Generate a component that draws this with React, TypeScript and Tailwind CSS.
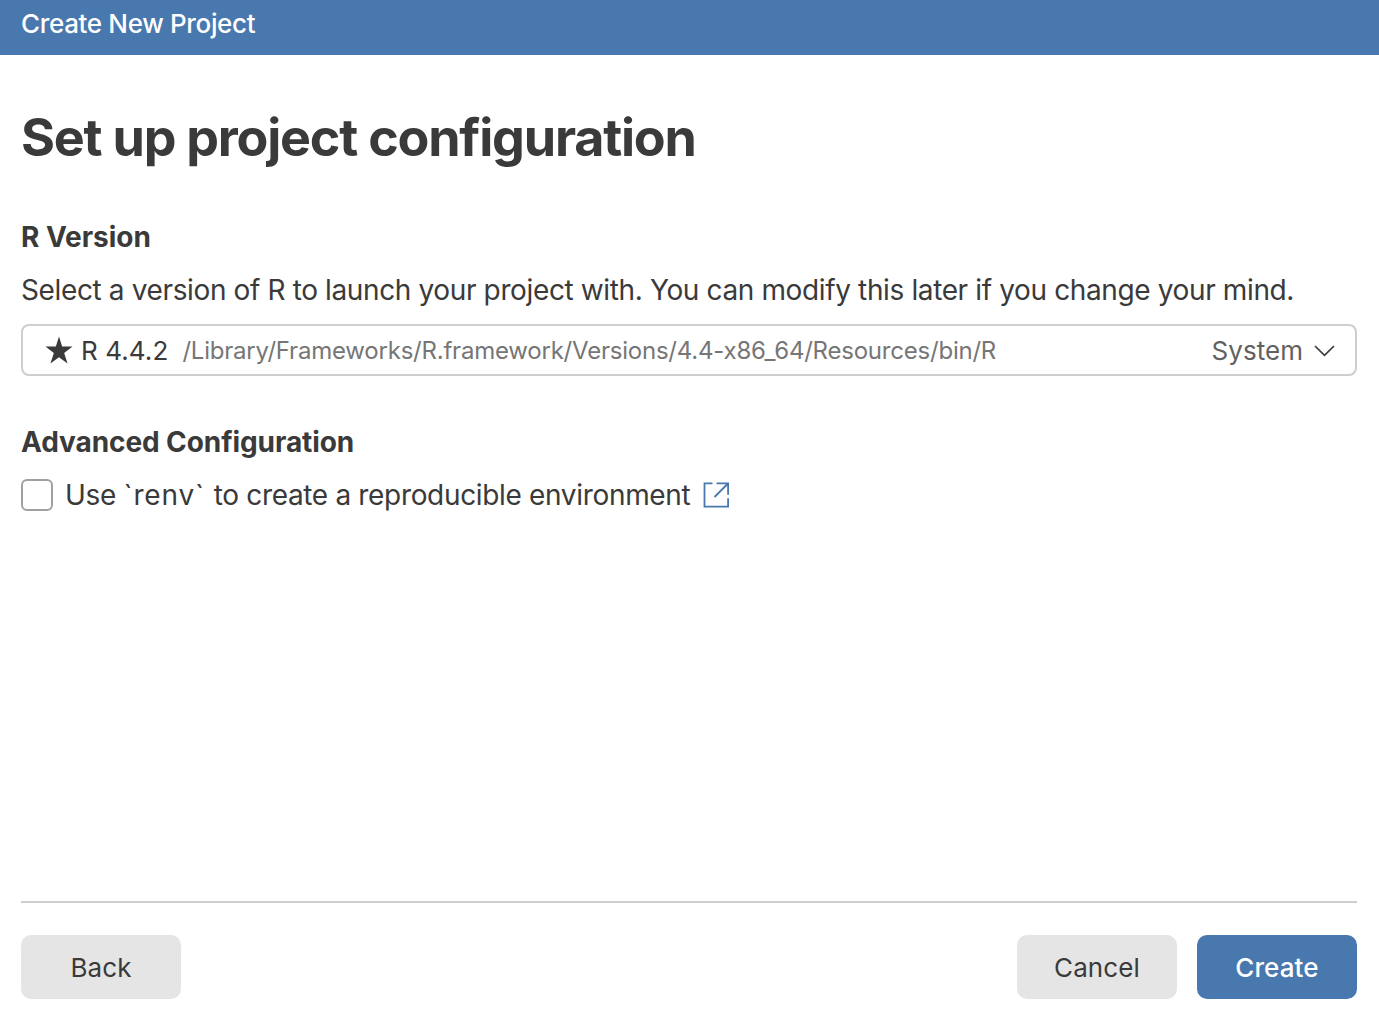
import React from 'react';

function ActionButton({ label, primary = false }: { label: string; primary?: boolean }) {
  return (
    <button
      className={`h-16 w-40 rounded-[10px] pt-0.5 text-[26px] leading-10 tracking-[0.1px] ${
        primary ? 'bg-[#4878ad] font-[450] text-white' : 'bg-[#e5e5e5] text-[#3a3a3a]'
      }`}
    >
      {label}
    </button>
  );
}

export default function App() {
  return (
    <div className="flex h-[1028px] w-full flex-col bg-white font-['Inter',sans-serif] text-[#3a3a3a]">
      <header className="flex h-[55px] shrink-0 items-start bg-[#4878ad] px-[21px] pt-[4px] text-[26px] leading-10 font-[450] tracking-[-0.34px] text-white">
        <span className="whitespace-nowrap">Create New Project</span>
      </header>
      <main className="flex flex-1 flex-col px-[21px] pr-[22px]">
        <h1 className="mt-[51px] h-16 text-[52px] leading-16 font-bold tracking-[-1.22px] whitespace-nowrap">
          <span>Set up project configuration</span>
        </h1>
        <h2 className="mt-[47px] h-10 text-[28px] leading-10 font-bold tracking-[-0.04px] whitespace-nowrap">
          <span>R Version</span>
        </h2>
        <p className="mt-[13px] h-10 text-[28px] leading-10 tracking-[-0.37px] whitespace-nowrap">
          <span>Select a version of R to launch your project with. You can modify this later if you change your mind.</span>
        </p>
        <button className="mt-[14px] flex h-[52px] items-center rounded-lg border-2 border-[#cecece] pr-[20px] pl-[22px] whitespace-nowrap">
          <svg className="h-7 w-7" viewBox="0 0 28 28" fill="currentColor">
            <path d="M14 .4l3.15 10.1h10.4l-8.4 6.5 3.4 10.5L14 21.2l-8.55 6.3 3.4-10.5L.45 10.5h10.4z" />
          </svg>
          <span className="ml-[8px] pt-0.5 text-[26px] leading-10 tracking-[0.1px]">R 4.4.2</span>
          <span className="ml-[14px] pt-px text-[24px] leading-10 tracking-[-0.22px] text-[#767676]">
            /Library/Frameworks/R.framework/Versions/4.4-x86_64/Resources/bin/R
          </span>
          <span className="ml-auto pt-0.5 text-[26px] leading-10 tracking-[0.05px] text-[#616161]">System</span>
          <svg className="mt-0.5 ml-[11px] h-3 w-[21px]" viewBox="0 0 21 12" fill="none" stroke="currentColor" strokeWidth="1.7">
            <path d="M1 1l9.5 9.4L20 1" />
          </svg>
        </button>
        <h2 className="mt-[46px] h-10 text-[28px] leading-10 font-bold tracking-[-0.08px] whitespace-nowrap">
          <span>Advanced Configuration</span>
        </h2>
        <div className="mt-[13px] flex h-10 items-center">
          <span className="h-8 w-8 rounded-md border-2 border-[#a0a0a0]" />
          <label className="ml-3 text-[28px] leading-10 tracking-[-0.33px] whitespace-nowrap">
            Use <span className="tracking-[0.85px]">`renv` </span>to create a reproducible environment
          </label>
          <svg className="ml-[13px] h-[26px] w-[27px]" viewBox="0 0 27 26" fill="none" stroke="#4878ad" strokeWidth="1.8">
            <path d="M9.5 1.4H1.5v23.2h23.6v-8.4M13.5 1.4h11.6v11.4M25 1.5L11.5 15" />
          </svg>
        </div>
        <footer className="mt-auto mb-[29px] flex h-[98px] items-end border-t-2 border-[#cecece]">
          <ActionButton label="Back" />
          <div className="ml-auto flex gap-5">
            <ActionButton label="Cancel" />
            <ActionButton label="Create" primary />
          </div>
        </footer>
      </main>
    </div>
  );
}
